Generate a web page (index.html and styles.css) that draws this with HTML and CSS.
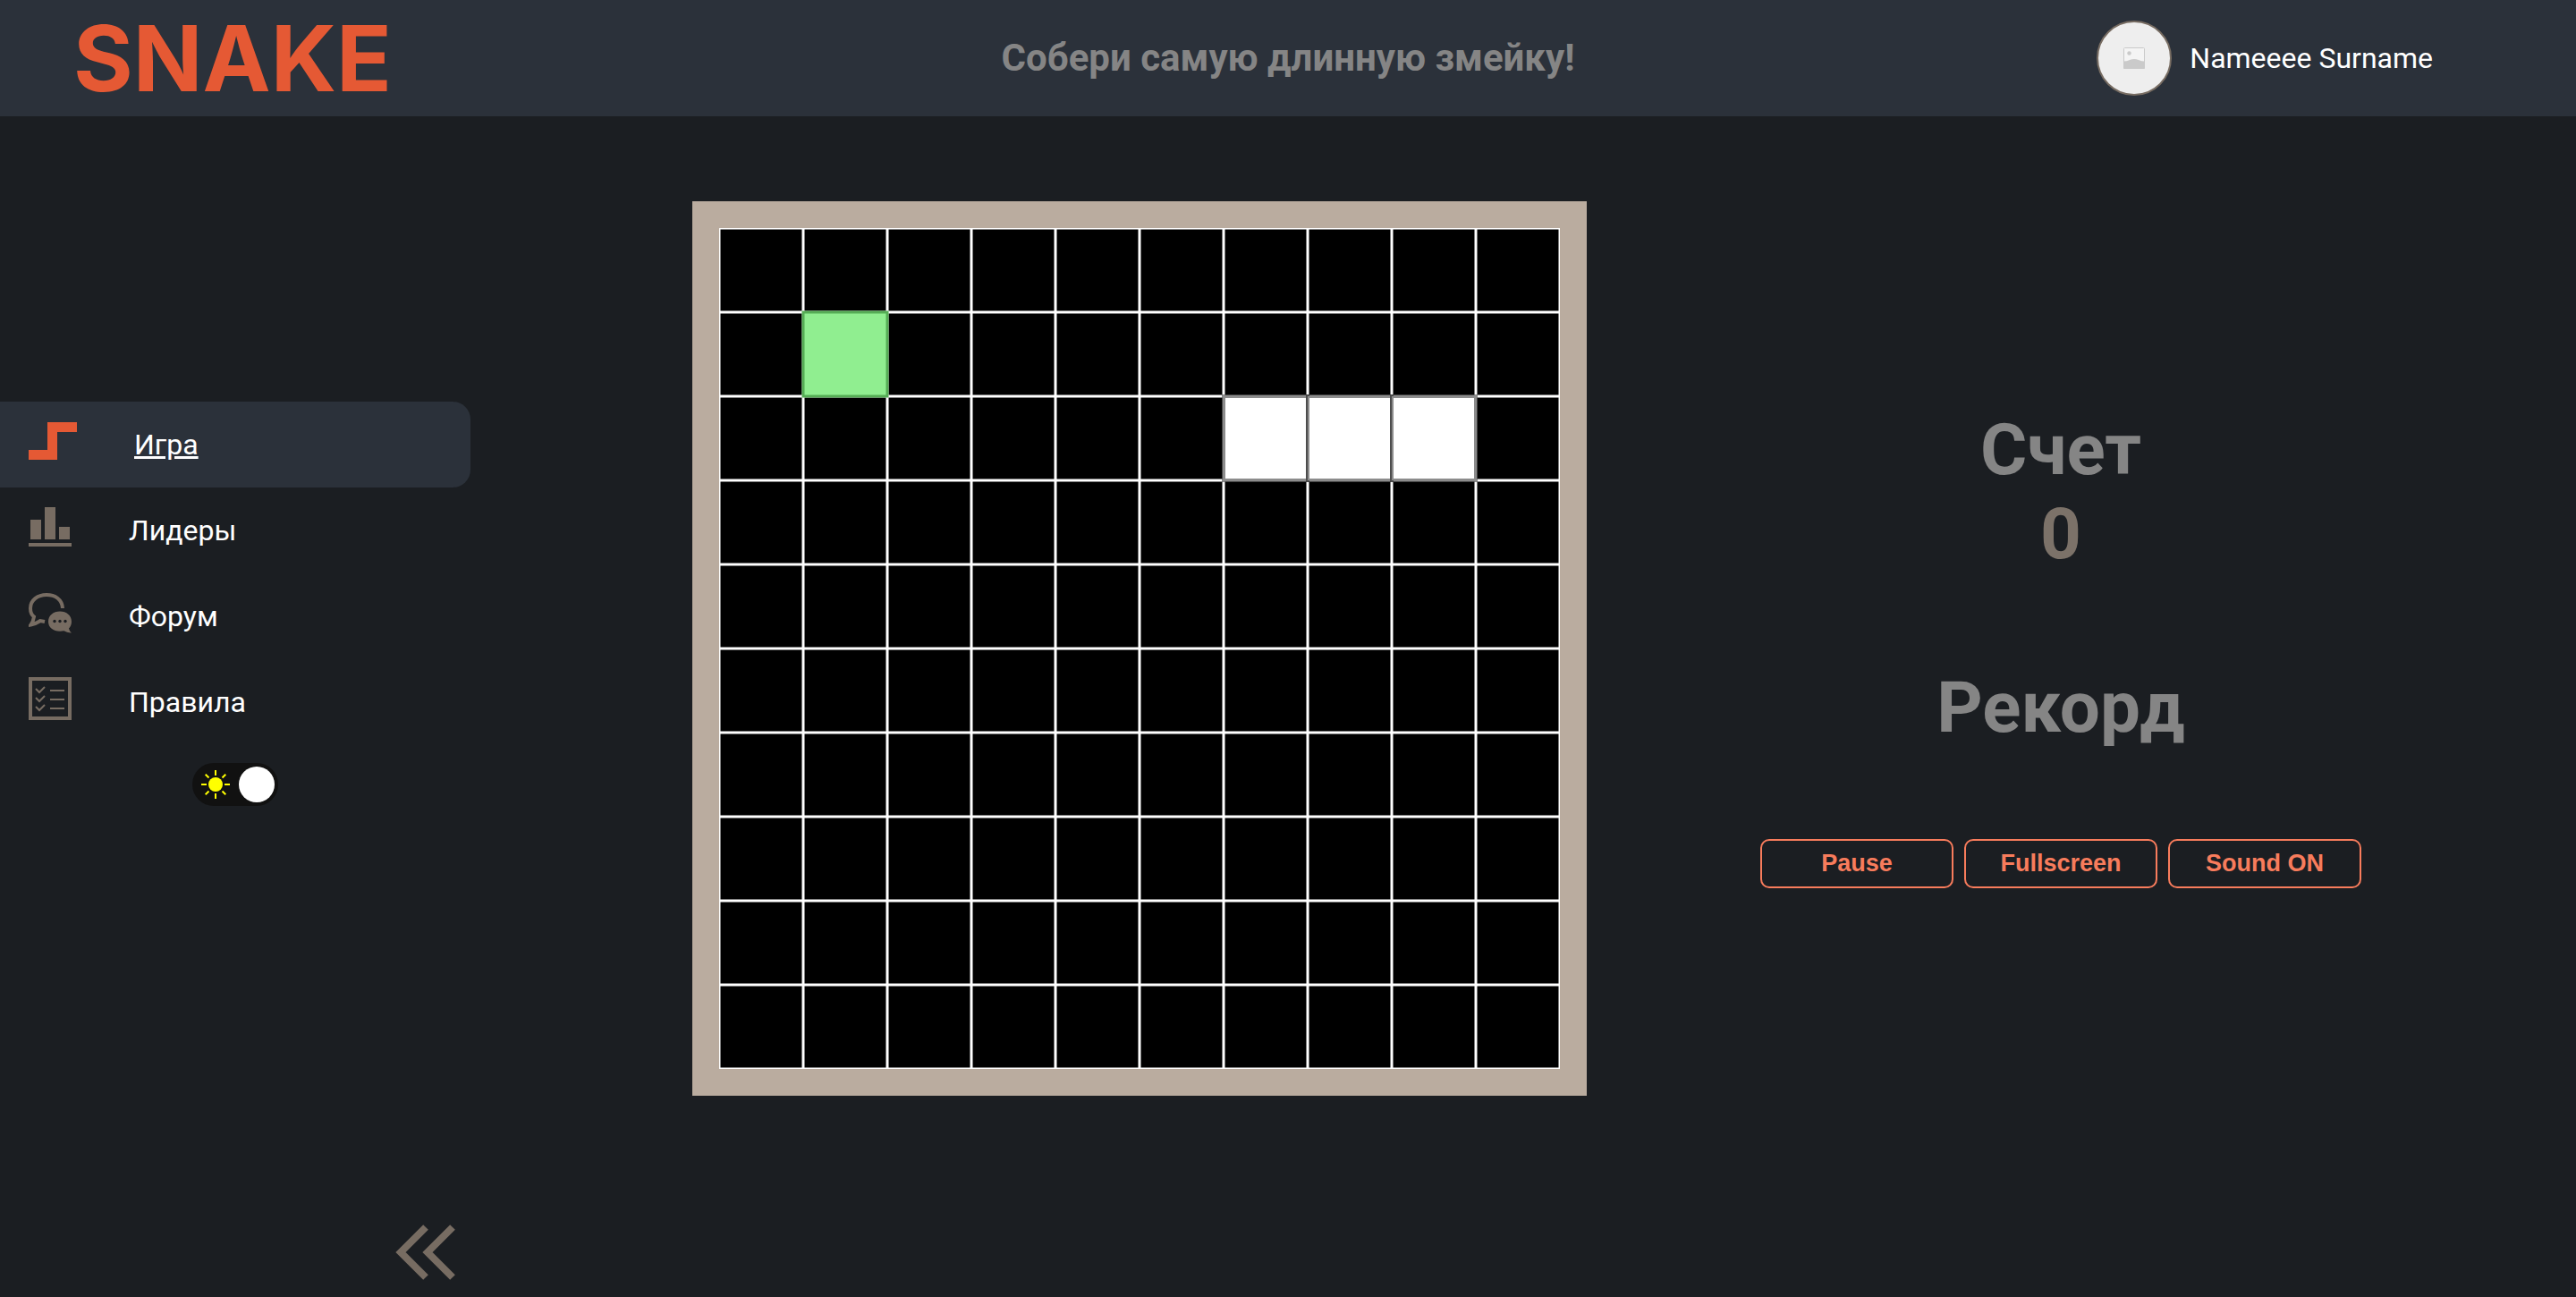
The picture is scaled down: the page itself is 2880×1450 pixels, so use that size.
FILE: index.html
```html
<!DOCTYPE html>
<html lang="ru">
<head>
<meta charset="utf-8">
<title>Snake</title>
<meta name="viewport" content="width=device-width, initial-scale=1">
<link rel="stylesheet" href="styles.css">
</head>
<body>
<header class="header">
  <a class="logo" href="#">SNAKE</a>
  <h1 class="slogan">Собери самую длинную змейку!</h1>
  <a class="user" href="#">
    <span class="avatar">
      <svg width="24" height="24" viewBox="0 0 24 24" aria-hidden="true">
        <rect x="0.5" y="0.5" width="23" height="23" rx="1" fill="#f4f4f4" stroke="#cacaca"/>
        <circle cx="6.500" cy="6.500" r="2.200" fill="#cacaca"/>
        <path d="M0 15.500 Q4 15.500 7 14 Q12 12 17 14 Q20 15.500 24 15.500 V23 Q24 24 23 24 H1 Q0 24 0 23Z" fill="#cacaca"/>
      </svg>
    </span>
    <span>Nameeee Surname</span>
  </a>
</header>
<main class="layout">
  <aside class="sidebar">
    <nav class="nav">
      <a class="nav-item nav-item-active" href="#">
        <svg width="54" height="42" viewBox="0 0 54 42" aria-hidden="true"><path d="M21 0H54V11H32V42H0V31H21Z" fill="#e55934"/></svg>
        <span>Игра</span>
      </a>
      <a class="nav-item" href="#">
        <svg width="48" height="48" viewBox="0 0 48 48" aria-hidden="true"><path d="M2 16H14V38H2ZM18 2H30V38H18ZM34 24H46V38H34ZM0 42H48V46H0Z" fill="#776c62"/></svg>
        <span>Лидеры</span>
      </a>
      <a class="nav-item" href="#">
        <svg width="48" height="48" viewBox="0 0 48 48" aria-hidden="true">
          <path d="M38 19C37.500 9 29.500 4 20 4C10 4 2 10 2 19C2 24 4 27 6 28.500C5.500 32 4 35.500 2.500 37.500C8 36.500 10.500 34.500 13 33L18 34" fill="none" stroke="#776c62" stroke-width="4"/>
          <path d="M35 22.500C42.500 22.500 48 27 48 34C48 37.500 46.500 40 45 41.500C45.500 43.500 46.500 45.500 48 46.500C44 46.300 41.500 45.500 39.500 44.300C38 44.600 36.500 44.700 35 44.700C27.500 44.700 22 40.500 22 34C22 27 27.500 22.500 35 22.500Z" fill="#776c62"/>
          <g fill="#1b1e22"><circle cx="29" cy="33.500" r="1.700"/><circle cx="35" cy="33.500" r="1.700"/><circle cx="41" cy="33.500" r="1.700"/></g>
        </svg>
        <span>Форум</span>
      </a>
      <a class="nav-item" href="#">
        <svg width="48" height="48" viewBox="0 0 48 48" aria-hidden="true">
          <path d="M2 2H46V46H2Z" fill="none" stroke="#776c62" stroke-width="4"/>
          <path d="M24 15H40M24 25H40M24 35H40M8 13L12 17L18 11M8 23L12 27L18 21M8 33L12 37L18 31" fill="none" stroke="#776c62" stroke-width="2"/>
        </svg>
        <span>Правила</span>
      </a>
    </nav>
    <label class="theme">
      <input class="theme-input" type="checkbox" checked aria-label="Тёмная тема">
      <svg class="sun" width="32" height="32" viewBox="0 0 32 32" aria-hidden="true">
        <circle cx="16" cy="16" r="8" fill="#ff0"/>
        <path d="M16 0V6M16 26V32M0 16H6M26 16H32M4.700 4.700L8.500 8.500M23.500 23.500L27.300 27.300M4.700 27.300L8.500 23.500M23.500 8.500L27.300 4.700" stroke="#ff0" stroke-width="2"/>
      </svg>
      <span class="knob"></span>
    </label>
    <button class="collapse" type="button" aria-label="Свернуть меню">
      <svg width="68" height="64" viewBox="0 0 68 64" aria-hidden="true"><path d="M34 4L6 32L34 60M64 4L36 32L64 60" fill="none" stroke="#776c62" stroke-width="8"/></svg>
    </button>
  </aside>
  <section class="game">
    <svg class="board" viewBox="0 0 940 940" role="img" aria-label="Игровое поле">
      <defs>
        <pattern id="cell" width="94" height="94" patternUnits="userSpaceOnUse">
          <rect width="94" height="94" fill="#000"/>
          <rect width="94" height="94" fill="none" stroke="#fff" stroke-width="3"/>
        </pattern>
      </defs>
      <rect width="940" height="940" fill="url(#cell)"/>
      <g stroke="#000" stroke-opacity="0.450" stroke-width="4" fill="#fff">
        <rect x="564" y="188" width="94" height="94"/>
        <rect x="658" y="188" width="94" height="94"/>
        <rect x="752" y="188" width="94" height="94"/>
      </g>
      <rect x="94" y="94" width="94" height="94" fill="#90ee90" stroke="#55ad55" stroke-width="3"/>
    </svg>
  </section>
  <section class="score">
    <h2 class="score-title">Счет</h2>
    <p class="score-value">0</p>
    <h2 class="score-title">Рекорд</h2>
    <div class="actions">
      <button class="action" type="button">Pause</button>
      <button class="action" type="button">Fullscreen</button>
      <button class="action" type="button">Sound ON</button>
    </div>
  </section>
</main>
</body>
</html>
```
FILE: styles.css
```css
* {
  box-sizing: border-box;
}

body {
  margin: 0;
  min-height: 100vh;
  display: flex;
  flex-direction: column;
  background: #1b1e22;
  color: #fff;
  font-family: Roboto, "Liberation Sans", sans-serif;
  font-size: 32px;
  line-height: 38px;
}

a {
  color: inherit;
  text-decoration: none;
}

.header {
  display: grid;
  grid-template-columns: 1fr auto 1fr;
  align-items: center;
  height: 130px;
  background: #2b313a;
}

.logo {
  padding-left: 82px;
  color: #e55934;
  font-family: Inter, Roboto, sans-serif;
  font-size: 102px;
  font-weight: 700;
  line-height: 124px;
}

.slogan {
  margin: 0;
  color: #858585;
  font-size: 42px;
  font-weight: 700;
  line-height: 48px;
}

.user {
  display: flex;
  align-items: center;
  justify-self: end;
  gap: 20px;
  padding-right: 160px;
}

.avatar {
  display: grid;
  place-items: center;
  width: 84px;
  height: 84px;
  border: 2px solid #776c62;
  border-radius: 50%;
  background: #eee;
}

.layout {
  flex: 1;
  display: grid;
  grid-template-columns: 526px 1248fr 1106fr;
}

.sidebar {
  display: flex;
  flex-direction: column;
}

.nav {
  margin-top: 319px;
}

.nav-item {
  display: flex;
  align-items: center;
  gap: 64px;
  height: 96px;
  padding-left: 32px;
  border-radius: 0 20px 20px 0;
}

.nav-item svg {
  margin-bottom: 8px;
}

.nav-item-active {
  background: #2b313a;
  text-decoration: underline;
}

.theme {
  display: flex;
  align-items: center;
  justify-content: space-between;
  align-self: center;
  width: 96px;
  height: 48px;
  margin-top: 20px;
  padding: 0 4px 0 10px;
  border-radius: 24px;
  background: #111;
  cursor: pointer;
}

.theme-input {
  position: absolute;
  opacity: 0;
}

.knob {
  width: 40px;
  height: 40px;
  border-radius: 50%;
  background: #fff;
}

.collapse {
  align-self: flex-end;
  margin: auto 16px 18px 0;
  padding: 0;
  border: 0;
  background: none;
  cursor: pointer;
}

.collapse svg {
  display: block;
}

.game {
  display: flex;
  align-items: flex-start;
  justify-content: flex-end;
  padding-top: 95px;
}

.board {
  width: 1000px;
  height: 1000px;
  border: 30px solid #baac9f;
}

.score {
  display: flex;
  flex-direction: column;
  align-items: center;
  padding: 326px 46px 0 0;
  text-align: center;
}

.score-title,
.score-value {
  margin: 0;
  font-size: 80px;
  font-weight: 700;
  line-height: 94px;
}

.score-title {
  color: #858585;
}

.score-value {
  margin-bottom: 100px;
  color: #7c7269;
}

.actions {
  display: flex;
  gap: 12px;
  margin-top: 100px;
}

.action {
  width: 216px;
  height: 55px;
  border: 2px solid #f87c5c;
  border-radius: 10px;
  background: none;
  color: #f87c5c;
  font-family: "Liberation Sans", Arial, sans-serif;
  font-size: 27px;
  font-weight: 700;
  cursor: pointer;
}
```
